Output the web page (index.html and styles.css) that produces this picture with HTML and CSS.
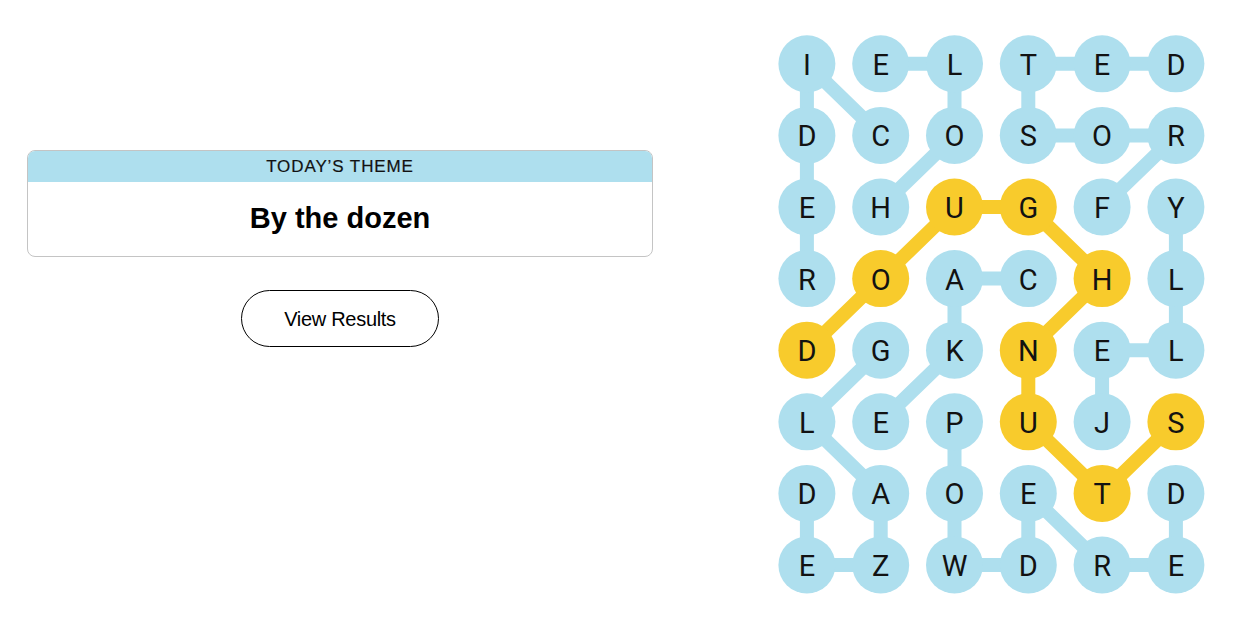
FILE: index.html
```html
<!DOCTYPE html>
<html lang="en">
<head>
<meta charset="utf-8">
<title>Strands</title>
<link rel="stylesheet" href="styles.css">
</head>
<body>
<main class="page">
  <section class="left">
    <div class="theme-card">
      <div class="theme-head">TODAY’S THEME</div>
      <div class="theme-body">By the dozen</div>
    </div>
    <div class="actions">
      <button class="results-btn" type="button">View Results</button>
    </div>
  </section>
  <section class="board">
    <svg class="board-svg" width="443" height="573" viewBox="0 0 443 573" xmlns="http://www.w3.org/2000/svg">
      <g class="edges blue">
        <polyline points="110.7,107.4 36.9,35.8 36.9,107.4 36.9,179 36.9,250.6"/>
        <polyline points="110.7,179 184.5,107.4 184.5,35.8 110.7,35.8"/>
        <polyline points="332.1,179 405.9,107.4 332.1,107.4 258.3,107.4 258.3,35.8 332.1,35.8 405.9,35.8"/>
        <polyline points="332.1,393.8 332.1,322.2 405.9,322.2 405.9,250.6 405.9,179"/>
        <polyline points="258.3,250.6 184.5,250.6 184.5,322.2 110.7,393.8"/>
        <polyline points="110.7,322.2 36.9,393.8 110.7,465.4 110.7,537 36.9,537 36.9,465.4"/>
        <polyline points="184.5,393.8 184.5,465.4 184.5,537 258.3,537 258.3,465.4 332.1,537 405.9,537 405.9,465.4"/>
      </g>
      <g class="edges gold">
        <polyline points="36.9,322.2 110.7,250.6 184.5,179 258.3,179 332.1,250.6 258.3,322.2 258.3,393.8 332.1,465.4 405.9,393.8"/>
      </g>
      <g class="cells">
        <circle cx="36.9" cy="35.8" r="28.5"/><text x="36.9" y="46.8">I</text>
        <circle cx="110.7" cy="35.8" r="28.5"/><text x="110.7" y="46.8">E</text>
        <circle cx="184.5" cy="35.8" r="28.5"/><text x="184.5" y="46.8">L</text>
        <circle cx="258.3" cy="35.8" r="28.5"/><text x="258.3" y="46.8">T</text>
        <circle cx="332.1" cy="35.8" r="28.5"/><text x="332.1" y="46.8">E</text>
        <circle cx="405.9" cy="35.8" r="28.5"/><text x="405.9" y="46.8">D</text>

        <circle cx="36.9" cy="107.4" r="28.5"/><text x="36.9" y="118.4">D</text>
        <circle cx="110.7" cy="107.4" r="28.5"/><text x="110.7" y="118.4">C</text>
        <circle cx="184.5" cy="107.4" r="28.5"/><text x="184.5" y="118.4">O</text>
        <circle cx="258.3" cy="107.4" r="28.5"/><text x="258.3" y="118.4">S</text>
        <circle cx="332.1" cy="107.4" r="28.5"/><text x="332.1" y="118.4">O</text>
        <circle cx="405.9" cy="107.4" r="28.5"/><text x="405.9" y="118.4">R</text>

        <circle cx="36.9" cy="179" r="28.5"/><text x="36.9" y="190">E</text>
        <circle cx="110.7" cy="179" r="28.5"/><text x="110.7" y="190">H</text>
        <circle class="gold" cx="184.5" cy="179" r="28.5"/><text x="184.5" y="190">U</text>
        <circle class="gold" cx="258.3" cy="179" r="28.5"/><text x="258.3" y="190">G</text>
        <circle cx="332.1" cy="179" r="28.5"/><text x="332.1" y="190">F</text>
        <circle cx="405.9" cy="179" r="28.5"/><text x="405.9" y="190">Y</text>

        <circle cx="36.9" cy="250.6" r="28.5"/><text x="36.9" y="261.6">R</text>
        <circle class="gold" cx="110.7" cy="250.6" r="28.5"/><text x="110.7" y="261.6">O</text>
        <circle cx="184.5" cy="250.6" r="28.5"/><text x="184.5" y="261.6">A</text>
        <circle cx="258.3" cy="250.6" r="28.5"/><text x="258.3" y="261.6">C</text>
        <circle class="gold" cx="332.1" cy="250.6" r="28.5"/><text x="332.1" y="261.6">H</text>
        <circle cx="405.9" cy="250.6" r="28.5"/><text x="405.9" y="261.6">L</text>

        <circle class="gold" cx="36.9" cy="322.2" r="28.5"/><text x="36.9" y="333.2">D</text>
        <circle cx="110.7" cy="322.2" r="28.5"/><text x="110.7" y="333.2">G</text>
        <circle cx="184.5" cy="322.2" r="28.5"/><text x="184.5" y="333.2">K</text>
        <circle class="gold" cx="258.3" cy="322.2" r="28.5"/><text x="258.3" y="333.2">N</text>
        <circle cx="332.1" cy="322.2" r="28.5"/><text x="332.1" y="333.2">E</text>
        <circle cx="405.9" cy="322.2" r="28.5"/><text x="405.9" y="333.2">L</text>

        <circle cx="36.9" cy="393.8" r="28.5"/><text x="36.9" y="404.8">L</text>
        <circle cx="110.7" cy="393.8" r="28.5"/><text x="110.7" y="404.8">E</text>
        <circle cx="184.5" cy="393.8" r="28.5"/><text x="184.5" y="404.8">P</text>
        <circle class="gold" cx="258.3" cy="393.8" r="28.5"/><text x="258.3" y="404.8">U</text>
        <circle cx="332.1" cy="393.8" r="28.5"/><text x="332.1" y="404.8">J</text>
        <circle class="gold" cx="405.9" cy="393.8" r="28.5"/><text x="405.9" y="404.8">S</text>

        <circle cx="36.9" cy="465.4" r="28.5"/><text x="36.9" y="476.4">D</text>
        <circle cx="110.7" cy="465.4" r="28.5"/><text x="110.7" y="476.4">A</text>
        <circle cx="184.5" cy="465.4" r="28.5"/><text x="184.5" y="476.4">O</text>
        <circle cx="258.3" cy="465.4" r="28.5"/><text x="258.3" y="476.4">E</text>
        <circle class="gold" cx="332.1" cy="465.4" r="28.5"/><text x="332.1" y="476.4">T</text>
        <circle cx="405.9" cy="465.4" r="28.5"/><text x="405.9" y="476.4">D</text>

        <circle cx="36.9" cy="537" r="28.5"/><text x="36.9" y="548">E</text>
        <circle cx="110.7" cy="537" r="28.5"/><text x="110.7" y="548">Z</text>
        <circle cx="184.5" cy="537" r="28.5"/><text x="184.5" y="548">W</text>
        <circle cx="258.3" cy="537" r="28.5"/><text x="258.3" y="548">D</text>
        <circle cx="332.1" cy="537" r="28.5"/><text x="332.1" y="548">R</text>
        <circle cx="405.9" cy="537" r="28.5"/><text x="405.9" y="548">E</text>
      </g>
    </svg>
  </section>
</main>
</body>
</html>
```
FILE: styles.css
```css
html, body {
  margin: 0;
  padding: 0;
  background: #ffffff;
}

body {
  font-family: "Liberation Sans", Arial, sans-serif;
  color: #000000;
  width: 1250px;
  height: 636px;
  overflow: hidden;
}

.page {
  display: flex;
  align-items: flex-start;
}

.left {
  width: 626px;
  margin-left: 27px;
  padding-top: 150px;
  display: flex;
  flex-direction: column;
}

.theme-card {
  border: 1px solid #c4c4c4;
  border-radius: 8px;
  overflow: hidden;
  box-sizing: border-box;
  height: 107px;
}

.theme-head {
  background: #aedfee;
  height: 31px;
  display: flex;
  align-items: center;
  justify-content: center;
  font-family: "Liberation Sans", Arial, sans-serif;
  font-size: 17px;
  letter-spacing: 0.9px;
  color: #121212;
  padding-top: 1px;
  box-sizing: border-box;
  -webkit-text-stroke: 0.2px #121212;
}

.theme-body {
  height: 74px;
  display: flex;
  align-items: center;
  justify-content: center;
  font-size: 29px;
  font-weight: bold;
  color: #000000;
  padding-bottom: 1px;
  box-sizing: border-box;
}

.actions {
  display: flex;
  justify-content: center;
  margin-top: 33px;
}

.results-btn {
  width: 198px;
  height: 57px;
  border: 1px solid #000000;
  border-radius: 30px;
  background: #ffffff;
  font-family: "Liberation Sans", Arial, sans-serif;
  font-size: 20px;
  color: #000000;
  padding: 2px 0 0 0;
  letter-spacing: -0.3px;
}

.board {
  margin-left: 117px;
  margin-top: 28px;
}

.board-svg {
  display: block;
}

.edges polyline {
  fill: none;
  stroke-width: 14;
  stroke-linejoin: round;
  stroke-linecap: round;
}

.edges.blue polyline {
  stroke: #aedfee;
}

.edges.gold polyline {
  stroke: #f8cb2c;
}

.cells circle {
  fill: #aedfee;
}

.cells circle.gold {
  fill: #f8cb2c;
}

.cells text {
  font-family: Roboto, "Liberation Sans", sans-serif;
  font-size: 29px;
  fill: #121212;
  text-anchor: middle;
}
```
